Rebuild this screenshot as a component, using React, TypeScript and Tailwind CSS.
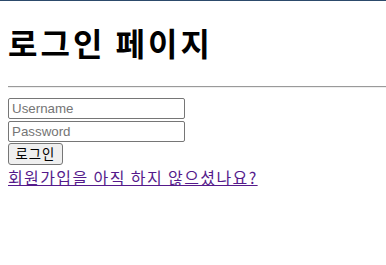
import React from "react";

export default function App() {
  return (
    <div className="w-[386px] h-[265px] bg-white overflow-hidden">
      <div className="h-px bg-[#2c4a6b]" />
      <div className="pl-2">
        <h1 className="mt-[20px] text-[32px] font-bold leading-[43px] tracking-[3px] text-black font-['Noto_Sans_CJK_KR',sans-serif]">
          로그인 페이지
        </h1>
        <div className="mt-[22px] h-[2px] border-t border-b border-t-[#9a9a9a] border-b-[#eeeeee]" />
        <div className="mt-[10px] flex flex-col items-start">
          <input
            placeholder="Username"
            className="w-[177px] h-[21px] border border-[#767676] rounded-[2px] px-[3px] text-[13.33px] text-black placeholder:text-[#757575] outline-none font-['Liberation_Sans',Arial,sans-serif]"
          />
          <input
            type="password"
            placeholder="Password"
            className="mt-[2px] w-[177px] h-[21px] border border-[#767676] rounded-[2px] px-[3px] text-[13.33px] text-black placeholder:text-[#757575] outline-none font-['Liberation_Sans',Arial,sans-serif]"
          />
          <button className="mt-[1px] w-[55px] h-[22px] border border-[#767676] rounded-[3px] bg-[#efefef] text-[13.33px] tracking-[1px] text-black leading-none font-['Noto_Sans_CJK_KR',sans-serif]">
            로그인
          </button>
          <a
            href="#"
            className="mt-[1px] text-[16px] leading-[22px] tracking-[1.4px] text-[#551a8b] underline font-['Noto_Sans_CJK_KR',sans-serif]"
          >
            회원가입을 아직 하지 않으셨나요?
          </a>
        </div>
      </div>
    </div>
  );
}
